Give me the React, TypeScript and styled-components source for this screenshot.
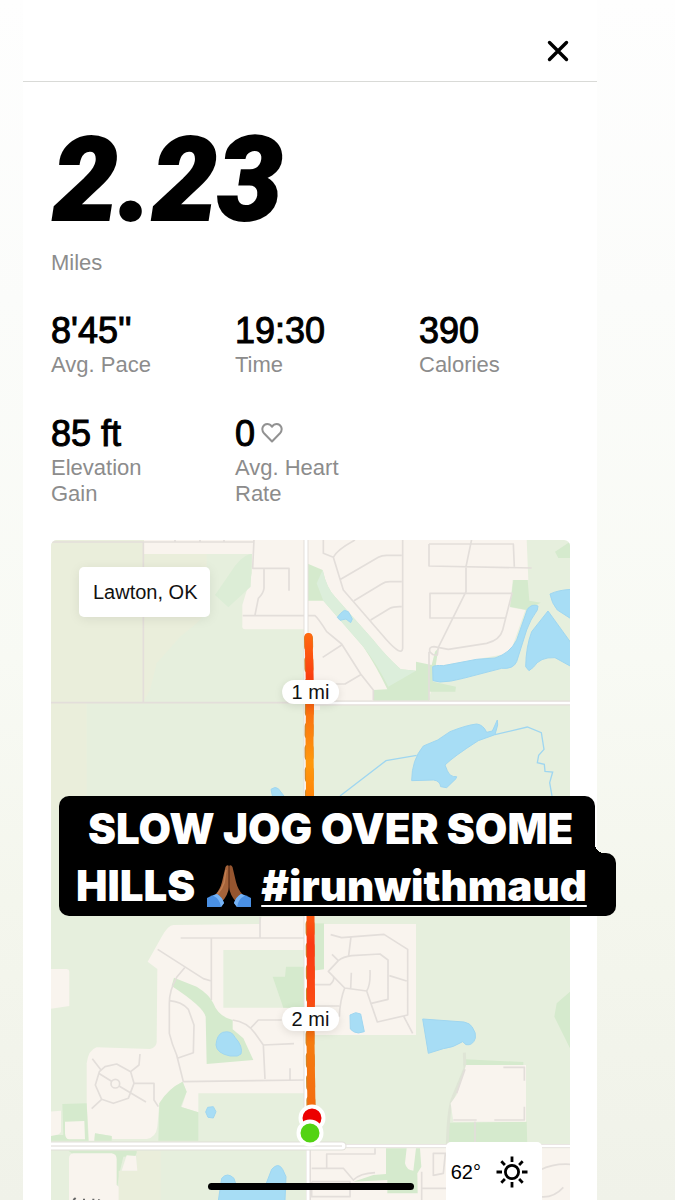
import React from "react";
import styled, { createGlobalStyle } from "styled-components";

const GlobalStyle = createGlobalStyle`
  *, *::before, *::after { box-sizing: border-box; }
  body {
    margin: 0;
    font-family: "Liberation Sans", Arial, sans-serif;
    color: #000;
    background: #fff;
  }
`;

const Story = styled.main`
  position: relative;
  min-height: 100vh;
  overflow: hidden;
  padding: 0 78px 0 23px;
  background: linear-gradient(
    #fefefe 0%,
    #fbfcfa 25%,
    #f8faf4 55%,
    #f4f6ed 75%,
    #f0f2e9 100%
  );
`;

const Card = styled.article`
  background: #fff;
`;

const TopBar = styled.header`
  display: flex;
  align-items: center;
  justify-content: flex-end;
  height: 82px;
  padding: 20px 24px 0 0;
  border-bottom: 1px solid #d9dad7;
`;

const CloseButton = styled.button`
  display: flex;
  width: 30px;
  height: 30px;
  padding: 0;
  align-items: center;
  justify-content: center;
  border: 0;
  background: none;
  cursor: pointer;
`;

const Content = styled.div`
  padding: 48px 27px 0 28px;
`;

const Distance = styled.h1`
  margin: 0;
  padding-left: 2px;
  font: italic 900 116px/100px Roboto, sans-serif;
  -webkit-text-stroke: 2px #000;
`;

const Label = styled.div`
  max-width: 120px;
  color: #8c8c8c;
  font-size: 22px;
  line-height: 26px;
`;

const DistanceLabel = styled(Label)`
  margin-top: 20px;
`;

const Stats = styled.section`
  display: grid;
  grid-template-columns: repeat(3, 1fr);
  gap: 35px 33px;
  margin: 34px 0 33px;
`;

const Value = styled.div`
  display: flex;
  align-items: center;
  gap: 6px;
  font-size: 36px;
  line-height: 42px;
  -webkit-text-stroke: 1px #000;
`;

const MapFrame = styled.section`
  position: relative;
`;

const MapDrawing = styled.svg`
  display: block;
  width: 100%;
  aspect-ratio: 519 / 660;
  border-radius: 6px 6px 0 0;
`;

const Place = styled.div`
  position: absolute;
  top: 27px;
  left: 28px;
  padding: 13px 12px 13px 14px;
  border-radius: 5px;
  background: #fff;
  box-shadow: 0 2px 12px rgba(0, 0, 0, 0.08);
  color: #111;
  font-size: 20px;
  line-height: 24px;
`;

const MilePin = styled.div<{ $top: string }>`
  position: absolute;
  top: ${(p) => p.$top};
  left: 50%;
  padding: 0 10px;
  border-radius: 12px;
  background: #fff;
  box-shadow: 0 2px 8px rgba(0, 0, 0, 0.1);
  color: #111;
  font-size: 20px;
  line-height: 24px;
  white-space: nowrap;
  transform: translate(-50%, -50%);
`;

const Weather = styled.div`
  position: absolute;
  right: 28px;
  bottom: 0;
  display: flex;
  align-items: center;
  gap: 15px;
  height: 58px;
  padding: 2px 14px 0 5px;
  border-radius: 5px 5px 0 0;
  background: #fff;
  font-size: 20px;
`;

const HomeBar = styled.div`
  position: absolute;
  bottom: 10px;
  left: 50%;
  width: 206px;
  height: 7px;
  border-radius: 4px;
  background: #000;
  transform: translateX(-50%);
`;

const Caption = styled.div`
  position: absolute;
  top: 256px;
  left: 8px;
  color: #fff;
  font: 900 42px/57px Inter, sans-serif;
  white-space: nowrap;
`;

const CaptionTop = styled.div`
  position: relative;
  width: 536px;
  height: 57px;
  padding: 4px 0 0 29px;
  border-radius: 10px 10px 0 0;
  background: #000;

  &::after {
    content: "";
    position: absolute;
    bottom: 0;
    left: 100%;
    width: 9px;
    height: 9px;
    background: radial-gradient(circle at 100% 0, transparent 9px, #000 9px);
  }
`;

const CaptionBottom = styled.div`
  display: flex;
  align-items: center;
  width: 557px;
  height: 63px;
  padding: 2px 0 0 17px;
  border-radius: 0 10px 10px 10px;
  background: #000;
`;

const HandsIcon = styled.svg`
  width: 44px;
  height: 44px;
  margin: 0 10px 0 12px;
`;

const HashTag = styled.a`
  color: inherit;
  text-decoration: underline;
  text-decoration-thickness: 2px;
  text-decoration-skip-ink: none;
  text-underline-offset: 4px;
`;

const LAND = "#f9f4ee";
const FIELD = "#e6efdd";
const MEADOW = "#eaeedb";
const PARK = "#d5eacd";
const WATER = "#a7ddf5";
const SHORE = "#9fd6f0";
const ROAD = "#e3deda";

const Tile = ({ x, y, children }: { x: number; y: number; children: React.ReactNode }) => (
  <g transform={`translate(${x} ${y}) scale(0.33333)`}>{children}</g>
);
const Area = ({ d, fill }: { d: string; fill: string }) => <path d={d} fill={fill} />;
const Lake = ({ d }: { d: string }) => (
  <path d={d} fill={WATER} stroke={SHORE} strokeWidth={3} strokeLinejoin="round" />
);
const Streets = ({ d }: { d: string }) => (
  <path d={d} fill="none" stroke={ROAD} strokeWidth={5} strokeLinejoin="round" />
);

function RouteMap() {
  return (
    <MapDrawing viewBox="51 540 519 660" role="img" aria-label="Route map">
      <defs>
        <linearGradient id="pace" gradientUnits="userSpaceOnUse" x1="0" y1="634" x2="0" y2="1110">
          <stop offset="0" stopColor="#ff6a10" />
          <stop offset="0.09" stopColor="#fb3f10" />
          <stop offset="0.13" stopColor="#fb5410" />
          <stop offset="0.17" stopColor="#fa7410" />
          <stop offset="0.27" stopColor="#ff990d" />
          <stop offset="0.38" stopColor="#ff7a08" />
          <stop offset="0.59" stopColor="#fd5a10" />
          <stop offset="0.65" stopColor="#fb3a14" />
          <stop offset="0.77" stopColor="#fb4a14" />
          <stop offset="0.86" stopColor="#f57c10" />
          <stop offset="1" stopColor="#f46c10" />
        </linearGradient>
      </defs>
      <rect x="51" y="540" width="519" height="660" fill={FIELD} />

      {/* north-west */}
      <Tile x={40} y={530}>
        <Area fill={MEADOW} d="M30 28H590L520 240L420 320L350 400L330 480L310 515L140 520V840H30Z" />
        <Area fill={FIELD} d="M430 72H640V515H330L350 400L480 270L500 230V72Z" />
        <Area fill={LAND} d="M312 28H840V540H802V298H615Q605 298 607 285V225L636 130V72H312Z" />
        <Area fill="#dcedd6" d="M630 72Q600 80 570 130L525 195L565 232L632 170L636 72Z" />
        <Streets d="M30 36H640M642 28L638 115H747V182M672 118V175Q670 190 655 205L645 255M608 257H792M310 36V515M30 518H790M405 28V36M480 28V36M552 28V36" />
        <Lake d="M693 778Q705 768 715 776L735 802H698Z" />
      </Tile>

      {/* north-east */}
      <Tile x={310} y={530}>
        <Area fill={LAND} d="M-10 28H650L655 150L608 150L600 232L646 240L600 370L385 408L355 512H-10Z" />
        <Area fill={PARK} d="M-10 100L38 120Q50 175 75 200L190 330Q225 375 272 418L318 422V395L365 405L375 365L385 355L370 455L438 470L436 485H357V512H190V480L232 478Q200 410 160 350L90 270L40 212H-10Z" />
        <Area fill="#dceedb" d="M38 120Q50 175 75 200L190 330Q225 375 272 418L318 422L235 470Q200 400 160 350L90 270L40 212L20 160Z" />
        <Area fill={PARK} d="M610 150H653L658 212L692 218L650 240L600 230Z" />
        <Area fill={PARK} d="M780 35L735 65L745 84H780Z" />
        <Streets d="M40 28V70L70 82L100 180L230 330Q275 380 278 355V28M70 82Q80 60 135 30M92 148L205 82Q215 76 230 76H275M132 212L215 162Q225 155 240 155H275M182 270L240 235Q250 229 275 230" />
        <Streets d="M485 28L468 110V185L385 352L382 375Q370 378 360 366Q355 350 372 350L415 358L530 340Q570 330 578 300L606 190H360V264H585M357 42H610L613 110M357 42V108L665 114M357 365V510" />
        <Streets d="M-10 257H15Q25 265 50 305L95 342L152 432L190 480V510M95 345L38 382M152 434L105 462H75" />
        <Lake d="M82 262L92 250L103 241L115 245L127 267L122 278L108 267L90 271Z" />
        <Lake d="M368 410Q375 405 400 407L500 388L555 384Q600 370 620 330L652 238Q665 220 684 228L682 240Q660 270 650 300L620 395Q610 418 575 415L460 445Q420 456 390 456L369 452Z" />
        <Lake d="M784 178Q745 180 720 192Q725 220 742 240L784 267Z" />
        <Lake d="M714 243L665 305Q648 350 647 410L657 422L670 412Q690 380 735 383L784 410V340Z" />
        <Streets d="M5 514H780M5 524H780" />
        <path d="M5 519H780" stroke="#fff" strokeWidth={8} />
        <path
          d="M90 798L228 692L320 676M555 614L652 591L694 608L702 658L686 676L682 698L703 703L705 724L728 726L719 758L726 798"
          fill="none" stroke={SHORE} strokeWidth={4}
        />
        <Lake d="M305 752Q305 690 340 648L383 630L420 605Q470 585 500 582Q520 584 530 607L547 603L562 570L563 585L555 614L505 632Q430 680 405 705L412 722Q420 742 440 740L438 746L410 773L392 770Q390 752 370 750Z" />
      </Tile>

      {/* south-west */}
      <Tile x={40} y={900}>
        <Area fill={LAND} d="M30 207H80Q88 208 88 215V318L30 327Z" />
        <Area fill={LAND} d="M400 75L660 72L665 50H798V580H475V637L425 622L440 575L428 545Q380 570 358 610L352 680Q348 712 320 717H217L215 708L165 700L163 722H147L140 610V490Q145 450 170 442L330 447Q350 442 350 425L352 207L323 185L365 110Q385 75 400 75Z" />
        <Area fill={FIELD} d="M550 150H798V323H550Z" />
        <Area fill={PARK} d="M698 230H735L738 200H798V323H730Z" />
        <Area fill={PARK} d="M402 233L470 260Q510 285 520 310Q535 350 578 360V388L610 415L640 480L500 492L497 350Q490 320 395 258Z" />
        <Lake d="M548 397Q575 390 585 412Q610 440 603 462L592 468H570Q530 460 528 435Q530 405 548 397Z" />
        <Lake d="M503 622L520 620L528 635L520 654L504 652L497 636Z" />
        <Area fill={PARK} d="M355 722L358 610Q385 565 428 545L440 575L422 620L475 637V722ZM67 612L140 610L145 722H30V705H70ZM165 700L215 708V722H163Z" />
        <Area fill={LAND} d="M30 635L63 632V695Q60 705 30 708ZM75 665L133 663L135 718H88Q76 718 75 700Z" />
        <Streets d="M422 114H798M660 50V112M514 114V300M353 148L490 236L514 243M434 203L410 232Q388 270 388 310V400Q395 430 410 465L430 545L798 540M388 302Q425 305 445 328L462 375L460 458L412 475M578 360Q620 365 645 400L670 435L675 537M632 384L655 360H725M670 435L762 431M750 505V540" />
        <Streets d="M195 500L230 492L272 515L282 550L265 595L220 610L185 598L166 555L178 515ZM183 510L157 476M272 515L297 495L300 462M282 550H342V600L355 620M185 598L155 626M176 520L217 545M237 558L318 606" />
        <circle cx="226" cy="551" r="13" fill={LAND} stroke={ROAD} strokeWidth={5} />
        <Area fill={PARK} d="M85 752H295L285 768L250 770L240 812L232 858Z" />
        <Area fill={MEADOW} d="M290 752H362V900H236V812H290Z" />
        <Area fill={LAND} d="M100 760H215Q230 762 230 778V855L236 860V900H87V775Q88 762 100 760ZM260 766L288 768L292 812H245Z" />
        <Lake d="M535 902L545 835Q562 815 582 835L590 860L672 868L695 808Q715 785 728 808L738 830L735 902Z" />
        <Area fill={LAND} d="M806 750H850V902H806Z" />
        <path d="M100 900L107 894M132 896V902M160 896V902M178 898L176 902" stroke="#666" strokeWidth={6} />
      </Tile>

      {/* south-east */}
      <Tile x={310} y={900}>
        <Area fill={PARK} d="M15 70H42V212H15Z" />
        <Area fill={LAND} d="M42 72H318V405H10V212L42 208Z" />
        <Streets d="M62 104L95 113L222 103L293 148V345L202 366L170 273L104 264L55 214L85 182Q100 170 125 167L210 162L234 180V298L184 310M123 110L116 167M66 163L85 182M122 265L124 218M170 273Q182 255 180 210M238 227L290 243M70 230Q75 240 60 254H15M104 264Q90 300 88 350M280 347L308 400M15 318H88" />
        <Lake d="M120 345L137 338L152 342L163 395L145 399Q130 398 121 387Z" />
        <Lake d="M338 357L462 366Q480 370 486 380Q500 400 496 415Q488 438 468 434L458 425Q430 443 400 446L355 460Z" />
        <Area fill={PARK} d="M780 275L740 310L733 350L780 445ZM465 478L640 486V496H460ZM413 668L650 665L652 738H411Z" />
        <path d="M463 458L465 505L430 590Q415 620 412 735" fill="none" stroke="#dfe5d6" strokeWidth={9} />
        <Area fill={LAND} d="M468 495H648V665H430L422 610L440 585Z" />
        <Streets d="M580 502H643V542M643 620V660H553M465 508L440 580M430 660H500M495 665V735" />
        <Area fill={LAND} d="M0 745H780V902H0Z" />
        <Area fill={PARK} d="M228 745H290L285 790Q290 812 310 812L318 745H330L334 800L322 820L323 880H232V840L130 845L190 825L228 822Z" />
        <Streets d="M5 805H100L130 840Q150 820 195 818M195 745V762H50V805M5 845V890H120V845H5M335 815V902M370 828V760H408M370 826L400 820L406 760M335 865H408M690 810Q730 790 780 793M690 890Q730 895 760 862" />
        <path d="M100 738H780" stroke={ROAD} strokeWidth={12} />
        <path d="M100 738H780" stroke="#fff" strokeWidth={7} />
      </Tile>

      {/* arterial roads */}
      <path d="M306 540V1118" stroke={ROAD} strokeWidth="5" />
      <path d="M306 540V1118" stroke="#fff" strokeWidth="3" />
      <path d="M308.500 1140V1200" stroke={ROAD} strokeWidth="5" />
      <path d="M308 1140V1200" stroke="#fff" strokeWidth="3" />
      <path d="M48 1146H342" stroke="#e0dfd8" strokeWidth="9" strokeLinecap="round" />
      <path d="M48 1146H342" stroke="#fff" strokeWidth="7" strokeLinecap="round" />
      <path d="M48 1146H342" stroke="#dcd8d4" strokeWidth="1" />

      {/* the run */}
      <g fill="none" strokeLinecap="round" strokeLinejoin="round">
        <path d="M308.500 638L309 670L309.500 700L309 740L309.500 800L310 916L310.500 1000L310 1040L311 1110" stroke="#c98a2c" strokeWidth="9" strokeDasharray="9 13" />
        <path d="M308.500 637L309.500 670L310 700L309.500 740L310 800L310.500 916L311 1000L310.500 1040L311.500 1110" stroke="url(#pace)" strokeWidth="8" />
      </g>
      <circle cx="312" cy="1118" r="11.500" fill="#ec0000" stroke="#fff" strokeWidth="4" />
      <circle cx="310" cy="1133" r="11.500" fill="#53d313" stroke="#fff" strokeWidth="4" />
    </MapDrawing>
  );
}

const HeartIcon = () => (
  <svg width="22" height="22" viewBox="0 0 22 22" fill="none" stroke="#929292" strokeWidth="2" strokeLinejoin="round" aria-label="heart">
    <path d="M11 18.500L3 10.200C-.4 6.500 2 1 6.200 1C8.500 1 10 2.300 11 3.800C12 2.300 13.500 1 15.800 1C20 1 22.400 6.500 19 10.200Z" />
  </svg>
);

const SunIcon = () => (
  <svg width="32" height="32" viewBox="0 0 32 32" fill="none" stroke="#000" strokeWidth="2.800">
    <circle cx="16" cy="16" r="6.600" />
    <path d="M16 .5V6M16 26V31.500M.5 16H6M26 16H31.500M5.300 5.300L8.900 8.900M23.100 23.100L26.700 26.700M26.700 5.300L23.100 8.900M8.900 23.100L5.300 26.700" />
  </svg>
);

const Hands = () => (
  <HandsIcon viewBox="0 0 44 44" role="img" aria-label="folded hands">
    <path d="M18.500 3Q20 0 22 2V23Q21 31 15 38L8 31Q13 26 15 18Z" fill="#a5633a" />
    <path d="M25.500 3Q24 0 22 2V23Q23 31 29 38L36 31Q31 26 29 18Z" fill="#95552f" />
    <path d="M22 2V25" stroke="#5c2e16" strokeWidth="1.200" />
    <path d="M19 6L17 19Q15 25 10.500 30" fill="none" stroke="#c07d50" strokeWidth="1.500" />
    <path d="M0 43V34Q5 31 10 30Q15 33 17 39L14 43Z" fill="#4a90e4" />
    <path d="M44 43V34Q39 31 34 30Q29 33 27 39L30 43Z" fill="#4a90e4" />
    <path d="M10 30Q15 33 17 39L14 43Q13 35 6 31.500Z" fill="#78b4f5" />
    <path d="M34 30Q29 33 27 39L30 43Q31 35 38 31.500Z" fill="#78b4f5" />
  </HandsIcon>
);

const stats = [
  { value: "8'45''", label: "Avg. Pace" },
  { value: "19:30", label: "Time" },
  { value: "390", label: "Calories" },
  { value: "85 ft", label: "Elevation Gain" },
  { value: "0", label: "Avg. Heart Rate", heart: true },
];

export default function App() {
  return (
    <>
      <GlobalStyle />
      <Story>
        <Card>
          <TopBar>
            <CloseButton type="button" aria-label="Close">
              <svg width="22" height="22" viewBox="0 0 22 22" stroke="#000" strokeWidth="3.400" strokeLinecap="round">
                <path d="M2.500 2.500L19.500 19.500M19.500 2.500L2.500 19.500" />
              </svg>
            </CloseButton>
          </TopBar>
          <Content>
            <Distance>2.23</Distance>
            <DistanceLabel>Miles</DistanceLabel>
            <Stats>
              {stats.map((s) => (
                <div key={s.label}>
                  <Value>
                    {s.value}
                    {s.heart && <HeartIcon />}
                  </Value>
                  <Label>{s.label}</Label>
                </div>
              ))}
            </Stats>
            <MapFrame>
              <RouteMap />
              <Place>Lawton, OK</Place>
              <MilePin $top="23%">1 mi</MilePin>
              <MilePin $top="72.6%">2 mi</MilePin>
              <Weather>
                62°
                <SunIcon />
              </Weather>
              <HomeBar />
              <Caption>
                <CaptionTop>SLOW JOG OVER SOME</CaptionTop>
                <CaptionBottom>
                  HILLS
                  <Hands />
                  <HashTag href="#irunwithmaud">#irunwithmaud</HashTag>
                </CaptionBottom>
              </Caption>
            </MapFrame>
          </Content>
        </Card>
      </Story>
    </>
  );
}
